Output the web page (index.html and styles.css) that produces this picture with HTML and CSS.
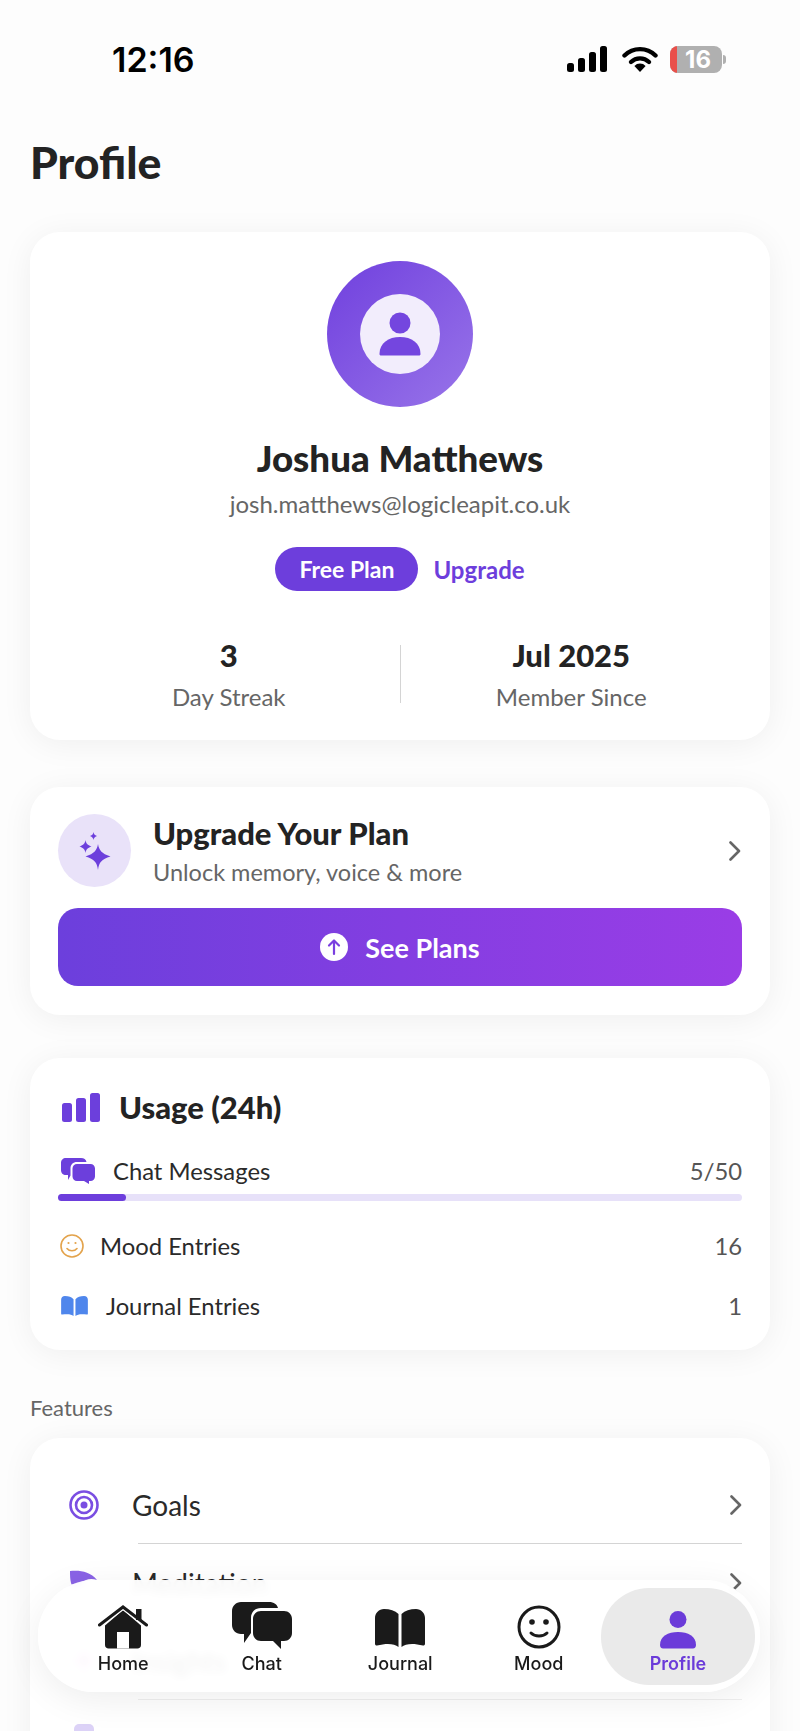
FILE: index.html
```html
<!DOCTYPE html>
<html lang="en">
<head>
    <meta charset="UTF-8">
    <meta name="viewport" content="width=device-width, initial-scale=1.0">
    <title>Profile</title>
    <link rel="stylesheet" href="styles.css">
</head>
<body>
    <div class="screen">
        <div class="status-bar">
            <span class="clock">12:16</span>
            <div class="status-icons">
                <svg class="signal" viewBox="0 0 40 26" width="40" height="26"><rect x="0" y="17" width="7" height="9" rx="2.5"/><rect x="11" y="12" width="7" height="14" rx="2.5"/><rect x="22" y="6" width="7" height="20" rx="2.5"/><rect x="33" y="0" width="7" height="26" rx="2.5"/></svg>
                <svg class="wifi" viewBox="0 0 36 26" width="36" height="26"><path d="M2.5 9.5a22 22 0 0 1 31 0" fill="none" stroke="#000" stroke-width="4.4" stroke-linecap="round"/><path d="M9 16a13 13 0 0 1 18 0" fill="none" stroke="#000" stroke-width="4.4" stroke-linecap="round"/><path d="M18 26l-5.6-6a7.6 7.6 0 0 1 11.2 0z"/></svg>
                <div class="battery"><span class="battery-low"></span><span class="battery-level">16</span></div>
                <span class="battery-cap"></span>
            </div>
        </div>

        <h1 class="page-title">Profile</h1>

        <section class="card profile-card">
            <div class="avatar">
                <div class="avatar-inner">
                    <svg viewBox="0 0 42 44" width="42" height="44"><circle cx="21" cy="11" r="10.5" fill="#7446df"/><path d="M0.5 42c0-11 9-17 20.500-17s20.500 6 20.500 17c0 1-.8 1.500-1.800 1.500H2.300C1.300 43.500.5 43 .5 42z" fill="#7446df"/></svg>
                </div>
            </div>
            <h2 class="profile-name">Joshua Matthews</h2>
            <p class="profile-email">josh.matthews@logicleapit.co.uk</p>
            <div class="plan-row">
                <span class="plan-pill">Free Plan</span>
                <span class="plan-link">Upgrade</span>
            </div>
            <div class="stats">
                <div class="stat">
                    <strong>3</strong>
                    <span>Day Streak</span>
                </div>
                <div class="stat-divider"></div>
                <div class="stat">
                    <strong>Jul 2025</strong>
                    <span>Member Since</span>
                </div>
            </div>
        </section>

        <section class="card upgrade-card">
            <div class="upgrade-head">
                <div class="spark-circle">
                    <svg viewBox="0 0 32 38" width="32" height="38" fill="#6c3fdc"><path d="M19 12c1 6 3.500 9.500 12.500 12.500C22.500 27.500 20 30 19 38c-1-8-3.500-10.500-12.500-13.500C15.500 21.500 18 18 19 12z"/><path d="M6.500 8c.5 3.500 2 5 6 6.500-4 1.500-5.500 3-6 6.500-.5-3.500-2-5-6-6.500 4-1.500 5.500-3 6-6.500z"/><path d="M14.500 0c.3 2 1 3 3.500 4-2.500 1-3.200 2-3.500 4-.3-2-1-3-3.500-4 2.500-1 3.200-2 3.500-4z"/></svg>
                </div>
                <div class="upgrade-text">
                    <h3>Upgrade Your Plan</h3>
                    <p>Unlock memory, voice &amp; more</p>
                </div>
                <svg class="chevron" viewBox="0 0 12 20" width="12" height="20"><path d="M1.500 1.500L10 10l-8.500 8.500"/></svg>
            </div>
            <div class="plans-button">
                <svg viewBox="0 0 28 28" width="28" height="28"><circle cx="14" cy="14" r="14" fill="#fff"/><path d="M14 21V8M9 12.500L14 7.500l5 5" fill="none" stroke="#7a3fe0" stroke-width="2.200" stroke-linecap="round" stroke-linejoin="round"/></svg>
                <span>See Plans</span>
            </div>
        </section>

        <section class="card usage-card">
            <div class="usage-head">
                <svg viewBox="0 0 38 29" width="38" height="29" fill="#6c3fdc"><rect x="0" y="10" width="10" height="19" rx="2.500"/><rect x="14" y="5" width="10" height="24" rx="2.500"/><rect x="28" y="0" width="10" height="29" rx="2.500"/></svg>
                <h3>Usage (24h)</h3>
            </div>
            <div class="usage-row chat-row">
                <svg viewBox="0 0 34 26" width="34" height="26" fill="#6c3fdc"><path d="M5 0h15c3 0 5 1.500 5.500 4H16c-4 0-6.500 2.500-6.500 6.500v7L7 22v-5H5c-3 0-5-2-5-5V5c0-3 2-5 5-5z"/><path d="M16 6h13.500c2.500 0 4.500 2 4.500 4.500v8c0 2.500-2 4.500-4.500 4.500H28v3l-5-3h-7c-2.500 0-4.500-2-4.500-4.500v-8C11.500 8 13.500 6 16 6z"/></svg>
                <span class="row-label">Chat Messages</span>
                <span class="row-value">5/50</span>
            </div>
            <div class="progress"><div class="progress-fill" style="width: 10%"></div></div>
            <div class="usage-row mood-row">
                <svg viewBox="0 0 24 24" width="24" height="24" fill="none" stroke="#e3a34c" stroke-width="1.600"><circle cx="12" cy="12" r="11"/><path d="M7 14.500c2.500 3 7.500 3 10 0" stroke-linecap="round"/><circle cx="8.500" cy="9" r="1.100" fill="#e3a34c" stroke="none"/><circle cx="15.500" cy="9" r="1.100" fill="#e3a34c" stroke="none"/></svg>
                <span class="row-label">Mood Entries</span>
                <span class="row-value">16</span>
            </div>
            <div class="usage-row journal-row">
                <svg viewBox="0 0 28 22" width="27" height="21" fill="#4f86ec"><path d="M13 3.500V21c-2.500-2-6-2.500-12-1.500-.6 0-1-.3-1-1V4c0-2.500 1.500-4 4-4 4 0 7 1 9 3.500z"/><path d="M15 3.500V21c2.500-2 6-2.500 12-1.500.6 0 1-.3 1-1V4c0-2.500-1.500-4-4-4-4 0-7 1-9 3.500z"/></svg>
                <span class="row-label">Journal Entries</span>
                <span class="row-value">1</span>
            </div>
        </section>

        <div class="section-label">Features</div>

        <section class="card features-card">
            <div class="feature-row">
                <svg class="feature-icon" viewBox="0 0 30 30" width="30" height="30" fill="none" stroke="#7a4ee2" stroke-width="2.600"><circle cx="15" cy="15" r="13.500"/><circle cx="15" cy="15" r="8"/><circle cx="15" cy="15" r="3.500" fill="#7a4ee2" stroke="none"/></svg>
                <span>Goals</span>
                <svg class="chevron" viewBox="0 0 12 20" width="12" height="20"><path d="M1.500 1.500L10 10l-8.500 8.500"/></svg>
            </div>
            <div class="feature-row">
                <svg class="feature-icon" viewBox="0 0 30 30" width="30" height="30" fill="#8a63e6"><path d="M1 3c9-1 20 0 27 9-6-2-12-1-17 4-4 4-8 3-9-1C1 11 1 7 1 3z"/></svg>
                <span>Meditation</span>
                <svg class="chevron" viewBox="0 0 12 20" width="12" height="20"><path d="M1.500 1.500L10 10l-8.500 8.500"/></svg>
            </div>
            <div class="feature-row feature-row-faint">
                <svg class="feature-icon" viewBox="0 0 30 30" width="30" height="30" fill="#e287e0"><path d="M15 2l3 9 9 4-9 3-3 10-3-10-9-3 9-4z"/></svg>
                <span>Insights</span>
            </div>
            <div class="feature-row feature-row-cut">
                <svg class="feature-icon" viewBox="0 0 30 30" width="30" height="30" fill="#dcd2f7"><rect x="5" y="0" width="20" height="30" rx="5"/></svg>
            </div>
        </section>

        <nav class="tab-bar">
            <div class="tab">
                <svg viewBox="0 0 50 44" width="50" height="44" fill="#1a1a1a"><path d="M7 20.500L25 5l18 15.500V40c0 2-1.500 3.500-3.500 3.500h-29C8.500 43.500 7 42 7 40z"/><path d="M1.500 19.500L25 1.500l23.500 18" fill="none" stroke="#fff" stroke-width="6"/><path d="M1.500 20L25 2l23.500 18" fill="none" stroke="#1a1a1a" stroke-width="3" stroke-linecap="round"/><rect x="38" y="4" width="5.500" height="11"/><rect x="19" y="27" width="12" height="16.500" fill="#fff"/></svg>
                <span>Home</span>
            </div>
            <div class="tab">
                <svg viewBox="0 0 60 47" width="60" height="47" fill="#1a1a1a"><path d="M9 0h28c5 0 8 2.500 9 6H29c-6 0-10 4-10 10v15l-7 10v-9H9c-5 0-9-4-9-9V9c0-5 4-9 9-9z"/><path d="M29 9h23c4.500 0 8 3.500 8 8v14c0 4.500-3.500 8-8 8h-3v8l-8-8H29c-4.500 0-8-3.500-8-8V17c0-4.500 3.500-8 8-8z"/></svg>
                <span>Chat</span>
            </div>
            <div class="tab">
                <svg viewBox="0 0 50 40" width="50" height="40" fill="#1a1a1a"><path d="M23.500 5v33c-4-3.500-12-4-21.500-1.500-1 .2-2-.5-2-1.500V9c0-5 4-9 9-9 6 0 11 1.500 14.500 5z"/><path d="M26.500 5v33c4-3.500 12-4 21.500-1.500 1 .2 2-.5 2-1.500V9c0-5-4-9-9-9-6 0-11 1.500-14.500 5z"/></svg>
                <span>Journal</span>
            </div>
            <div class="tab">
                <svg viewBox="0 0 44 44" width="44" height="44" fill="none" stroke="#1a1a1a" stroke-width="3"><circle cx="22" cy="22" r="20"/><path d="M14 28c4 4 12 4 16 0" stroke-linecap="round"/><circle cx="15" cy="17" r="2.800" fill="#1a1a1a" stroke="none"/><circle cx="29" cy="17" r="2.800" fill="#1a1a1a" stroke="none"/></svg>
                <span>Mood</span>
            </div>
            <div class="tab tab-active">
                <svg viewBox="0 0 36 38" width="36" height="38" fill="#6b3bd9"><circle cx="18" cy="8.500" r="8.500"/><path d="M0 34c0-9 8-13 18-13s18 4 18 13c0 2.500-1.500 3.500-3 3.500H3c-1.500 0-3-1-3-3.500z"/></svg>
                <span>Profile</span>
            </div>
        </nav>
    </div>
</body>
</html>
```

FILE: styles.css
```css
* {
    box-sizing: border-box;
}
body {
    margin: 0;
    font-family: Lato, "Noto Sans", sans-serif;
    color: #232323;
    background: #fdfdfd;
}
.screen {
    position: relative;
    width: 800px;
    height: 1731px;
    overflow: hidden;
    background: #fdfdfd;
}
h1, h2, h3, p {
    margin: 0;
}

/* status bar */
.status-bar {
    display: flex;
    justify-content: space-between;
    align-items: center;
    height: 50px;
    margin-top: 34px;
    padding: 0 74px 0 112px;
}
.clock {
    font-family: Inter, sans-serif;
    font-size: 34px;
    font-weight: 600;
    color: #000;
}
.status-icons {
    display: flex;
    align-items: center;
}
.signal {
    margin-right: 15px;
}
.wifi {
    margin-right: 12px;
}
.battery {
    position: relative;
    display: flex;
    justify-content: center;
    width: 52px;
    height: 27px;
    padding-left: 4px;
    border-radius: 8px;
    background: #b0b0b0;
    overflow: hidden;
}
.battery-low {
    position: absolute;
    left: 0;
    top: 0;
    bottom: 0;
    width: 7px;
    background: #e9504a;
}
.battery-level {
    font-family: Inter, sans-serif;
    font-size: 24px;
    font-weight: 700;
    line-height: 27px;
    color: #fff;
}
.battery-cap {
    width: 3px;
    height: 9px;
    margin-left: 1px;
    border-radius: 0 3px 3px 0;
    background: #b0b0b0;
}

.page-title {
    margin: 52px 0 0 30px;
    font-size: 44.500px;
    line-height: 52px;
    font-weight: 900;
}

/* cards */
.card {
    margin: 0 30px;
    background: #fff;
    border-radius: 30px;
    box-shadow: 0 4px 32px rgba(0, 0, 0, 0.06);
}
.profile-card {
    display: flex;
    flex-direction: column;
    align-items: center;
    height: 508px;
    margin-top: 44px;
    padding-top: 29px;
}
.avatar {
    display: flex;
    justify-content: center;
    align-items: center;
    width: 146px;
    height: 146px;
    border-radius: 50%;
    background: linear-gradient(135deg, #7040de, #9874e9);
}
.avatar-inner {
    display: flex;
    justify-content: center;
    align-items: center;
    width: 80px;
    height: 80px;
    border-radius: 50%;
    background: #f2edfc;
}
.profile-name {
    margin-top: 29px;
    font-size: 36.700px;
    line-height: 44px;
    font-weight: 900;
}
.profile-email {
    margin-top: 8px;
    font-size: 24px;
    line-height: 32px;
    color: #666;
}
.plan-row {
    display: flex;
    align-items: center;
    gap: 15px;
    margin-top: 27px;
}
.plan-pill {
    width: 143px;
    height: 44px;
    border-radius: 22px;
    background: #6d3edc;
    color: #fff;
    font-size: 23px;
    font-weight: 700;
    line-height: 44px;
    text-align: center;
}
.plan-link {
    font-size: 24px;
    font-weight: 700;
    color: #6d3edc;
}
.stats {
    display: flex;
    align-items: center;
    width: 100%;
    margin-top: 46px;
    padding: 0 28px;
}
.stat {
    flex: 1;
    display: flex;
    flex-direction: column;
    align-items: center;
    gap: 10px;
}
.stat strong {
    font-size: 31px;
    line-height: 36px;
    font-weight: 900;
}
.stat span {
    font-size: 24px;
    line-height: 28px;
    color: #666;
}
.stat-divider {
    width: 1px;
    height: 58px;
    background: #d4d4d4;
}

.upgrade-card {
    height: 228px;
    margin-top: 47px;
    padding: 27px 28px;
}
.upgrade-head {
    display: flex;
    align-items: center;
}
.spark-circle {
    display: flex;
    justify-content: center;
    align-items: center;
    width: 73px;
    height: 73px;
    border-radius: 50%;
    background: #e9e2f9;
}
.upgrade-text {
    flex: 1;
    margin-left: 22px;
}
.upgrade-text h3 {
    font-size: 31px;
    line-height: 38px;
    font-weight: 900;
}
.upgrade-text p {
    margin-top: 5px;
    font-size: 23.500px;
    line-height: 30px;
    color: #666;
}
.chevron {
    flex: none;
    fill: none;
    stroke: #666;
    stroke-width: 2.600;
    stroke-linecap: round;
    stroke-linejoin: round;
}
.upgrade-head .chevron {
    margin-right: 1px;
}
.plans-button {
    display: flex;
    justify-content: center;
    align-items: center;
    gap: 17px;
    height: 78px;
    margin-top: 21px;
    border-radius: 20px;
    background: linear-gradient(90deg, #6c3fdc, #9a3de6);
    color: #fff;
    font-size: 27px;
    font-weight: 700;
}

.usage-card {
    height: 292px;
    margin-top: 43px;
    padding: 32px 28px 0;
}
.usage-head {
    display: flex;
    align-items: center;
    gap: 19px;
    padding-left: 4px;
}
.usage-head h3 {
    font-size: 31px;
    line-height: 34px;
    font-weight: 900;
}
.usage-row {
    display: flex;
    align-items: center;
    font-size: 23.800px;
    color: #2a2a2a;
}
.row-label {
    flex: 1;
}
.row-value {
    color: #555;
}
.chat-row {
    gap: 18px;
    margin-top: 33px;
    padding-left: 3px;
}
.progress {
    height: 7px;
    margin-top: 9px;
    border-radius: 4px;
    background: #e7e1f9;
}
.progress-fill {
    height: 100%;
    border-radius: 4px;
    background: #6d3edc;
}
.mood-row {
    gap: 16px;
    margin-top: 31px;
    padding-left: 2px;
}
.journal-row {
    gap: 18px;
    margin-top: 32px;
    padding-left: 3px;
}

.section-label {
    margin: 44px 0 0 30px;
    font-size: 22px;
    line-height: 28px;
    color: #666;
}

.features-card {
    height: 420px;
    margin-top: 16px;
    padding: 28px 28px 0;
}
.feature-row {
    position: relative;
    display: flex;
    align-items: center;
    height: 78px;
    font-size: 28px;
    color: #2a2a2a;
}
.feature-row::after {
    content: "";
    position: absolute;
    left: 80px;
    right: 0;
    bottom: 0;
    height: 1px;
    background: #d4d4d4;
}
.feature-row-faint::after {
    background: #efefef;
}
.feature-row-cut {
    align-items: flex-start;
    padding-top: 24px;
}
.feature-icon {
    margin: 0 33px 0 11px;
}
.feature-row span {
    flex: 1;
}

/* floating tab bar */
.tab-bar {
    position: absolute;
    left: 38px;
    top: 1580px;
    display: flex;
    align-items: stretch;
    width: 722px;
    height: 112px;
    padding: 8px 6px 7px 16px;
    border-radius: 56px;
    background: rgba(255, 255, 255, 0.94);
    backdrop-filter: blur(4px);
    box-shadow: 0 8px 36px rgba(0, 0, 0, 0.07);
}
.tab {
    flex: 0 0 138.500px;
    display: flex;
    flex-direction: column;
    align-items: center;
    justify-content: flex-end;
    gap: 4px;
    padding-bottom: 11px;
    font-family: Inter, sans-serif;
    font-size: 18px;
    font-weight: 500;
    color: #1a1a1a;
}
.tab-active {
    flex: 0 0 154px;
    margin-left: -7px;
    border-radius: 48px;
    background: #eaeaea;
    color: #6b3bd9;
    font-weight: 600;
}
```
